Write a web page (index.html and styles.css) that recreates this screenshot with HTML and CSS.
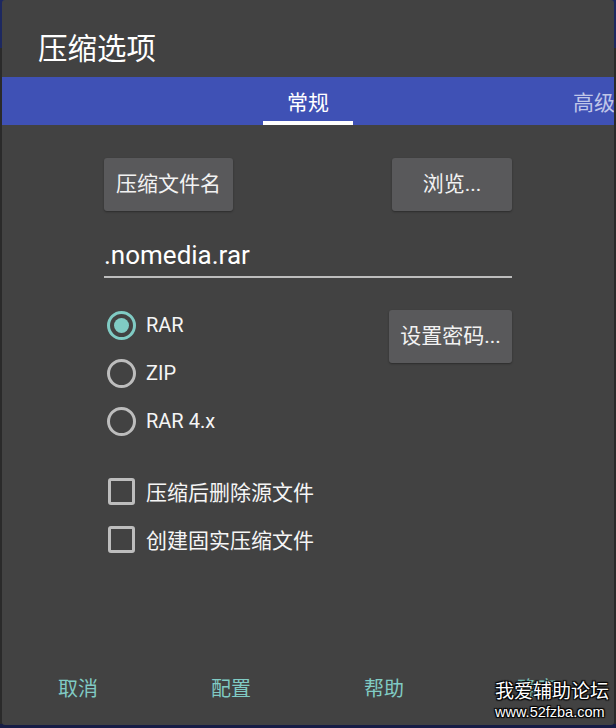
FILE: index.html
```html
<!DOCTYPE html>
<html lang="zh">
<head>
<meta charset="utf-8">
<title>压缩选项</title>
<link rel="stylesheet" href="styles.css">
</head>
<body>
<div class="dialog">
  <div class="title">压缩选项</div>
  <div class="tabs">
    <div class="tab active">常规</div>
    <div class="tab dim">高级</div>
  </div>
  <div class="content">
    <div class="row-buttons">
      <div class="btn btn-name">压缩文件名</div>
      <div class="btn btn-browse">浏览...</div>
    </div>
    <div class="field">.nomedia.rar</div>
    <div class="options">
      <div class="radios">
        <div class="opt"><span class="icon"><span class="radio on"></span></span><span class="label">RAR</span></div>
        <div class="opt"><span class="icon"><span class="radio"></span></span><span class="label">ZIP</span></div>
        <div class="opt"><span class="icon"><span class="radio"></span></span><span class="label">RAR 4.x</span></div>
      </div>
      <div class="btn btn-pass">设置密码...</div>
    </div>
    <div class="checks">
      <div class="opt"><span class="icon"><span class="check"></span></span><span class="label">压缩后删除源文件</span></div>
      <div class="opt"><span class="icon"><span class="check"></span></span><span class="label">创建固实压缩文件</span></div>
    </div>
  </div>
  <div class="actions">
    <div class="action">取消</div>
    <div class="action">配置</div>
    <div class="action">帮助</div>
    <div class="action">确定</div>
  </div>
  <div class="watermark">
    <div class="wm-cn">我爱辅助论坛</div>
    <div class="wm-url">www.52fzba.com</div>
  </div>
</div>
</body>
</html>
```

FILE: styles.css
```css
html, body {
  margin: 0;
  padding: 0;
}
body {
  width: 616px;
  height: 728px;
  overflow: hidden;
  background: linear-gradient(#1d2860 0, #1d2860 48px, #2a2a2a 48px, #2a2a2a 724px, #161c45 724px);
  font-family: "Roboto", "Noto Sans CJK SC", sans-serif;
  color: #ffffff;
}
.dialog {
  position: relative;
  margin: 0 2px;
  height: 725px;
  background: #424242;
  border-radius: 3px;
  display: flex;
  flex-direction: column;
  overflow: hidden;
}
.title {
  height: 77px;
  box-sizing: border-box;
  padding: 29px 0 0 36px;
  font-size: 29.5px;
  line-height: 40px;
  color: #ffffff;
}
.tabs {
  height: 48px;
  background: #3f51b5;
  display: flex;
  padding-left: 261px;
  gap: 196px;
}
.tab {
  width: 90px;
  flex: none;
  box-sizing: border-box;
  text-align: center;
  font-size: 21px;
  line-height: 24px;
  padding-top: 14px;
  color: #ffffff;
}
.tab.active {
  border-bottom: 4px solid #ffffff;
}
.tab.dim {
  color: #c0c6e8;
}
.content {
  padding: 33px 102px 0 102px;
}
.row-buttons {
  display: flex;
  justify-content: space-between;
}
.btn {
  height: 53px;
  box-sizing: border-box;
  background: #59595b;
  border-radius: 3px;
  box-shadow: 0 1px 2px rgba(0, 0, 0, 0.35);
  font-size: 21px;
  line-height: 53px;
  text-align: center;
  color: #f2f2f2;
}
.btn-name { width: 129px; }
.btn-browse { width: 120px; }
.btn-pass {
  width: 123px;
  margin-top: 9px;
}
.field {
  margin-top: 25px;
  height: 40px;
  font-size: 26px;
  line-height: 39px;
  border-bottom: 2px solid #bdbdbd;
  color: #ffffff;
}
.options {
  margin-top: 23px;
  display: flex;
  justify-content: space-between;
  align-items: flex-start;
}
.opt {
  height: 48px;
  display: flex;
  align-items: center;
  gap: 10px;
}
.icon {
  width: 30px;
  margin-left: 2px;
  display: flex;
  justify-content: center;
  align-items: center;
}
.label {
  font-size: 20px;
  color: #f5f5f5;
}
.checks .label {
  font-size: 21px;
}
.radio {
  width: 29px;
  height: 29px;
  box-sizing: border-box;
  border: 3px solid #bdbdbd;
  border-radius: 50%;
  display: flex;
  align-items: center;
  justify-content: center;
}
.radio.on {
  border-color: #80cbc4;
}
.radio.on::after {
  content: "";
  width: 15px;
  height: 15px;
  border-radius: 50%;
  background: #80cbc4;
}
.checks {
  margin-top: 22px;
}
.check {
  width: 27px;
  height: 27px;
  box-sizing: border-box;
  border: 3px solid #bdbdbd;
  border-radius: 3px;
}
.actions {
  margin-top: auto;
  height: 76px;
  display: grid;
  grid-template-columns: repeat(4, 153px);
  padding-left: 56px;
  align-items: center;
}
.action {
  font-size: 20px;
  color: #80cbc4;
}
.watermark {
  position: absolute;
  right: 5px;
  bottom: 3px;
  text-align: left;
  color: #ffffff;
  text-shadow: 0 0 2px #000, 1px 1px 1px #000, -1px -1px 1px #000, 1px -1px 1px #000, -1px 1px 1px #000;
}
.wm-cn {
  font-family: "Noto Sans CJK SC", sans-serif;
  font-size: 19px;
  line-height: 24px;
}
.wm-url {
  font-family: "Liberation Sans", sans-serif;
  font-size: 14.5px;
  line-height: 20px;
}
```
